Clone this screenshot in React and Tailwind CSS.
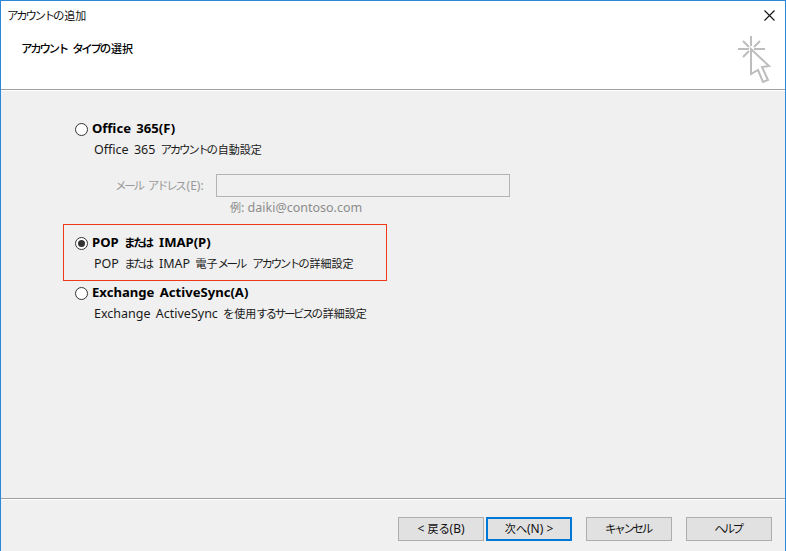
import React from 'react';

const jp = 'font-["Noto_Sans","Noto_Sans_CJK_JP",sans-serif]';

// kana are narrow in the original UI font
const K = ({ children }) => <span className="text-[11.5px] tracking-[-2.3px] mr-[2px]">{children}</span>;
const H = ({ children }) => <span className="text-[11px]">{children}</span>;

const Radio = ({ checked }) => (
  <span className="w-[13px] h-[13px] rounded-full border border-[#333333] bg-white flex items-center justify-center shrink-0">
    {checked && <span className="w-[7px] h-[7px] rounded-full bg-[#333333]" />}
  </span>
);

const Option = ({ label, desc, checked }) => (
  <div>
    <div className="flex items-center gap-[4px] h-[16px]">
      <Radio checked={checked} />
      <span className="text-[13.1px] font-bold text-black whitespace-nowrap [word-spacing:2px]">{label}</span>
    </div>
    <div className="mt-[5px] ml-[19px] h-[16px] text-[12.5px] leading-[16px] text-[#1a1a1a] whitespace-nowrap [word-spacing:2px]">{desc}</div>
  </div>
);

const Btn = ({ children, primary, className = '' }) => (
  <button
    className={`w-[86px] h-[24px] bg-[#e1e1e1] text-[12px] text-[#111111] flex items-center justify-center whitespace-pre ${
      primary ? 'border-2 border-[#0078d7]' : 'border border-[#adadad]'
    } ${className}`}
  >
    {children}
  </button>
);

export default function App() {
  return (
    <div className={`w-[786px] h-[551px] flex flex-col bg-[#f0f0f0] overflow-hidden border-t border-x border-[#2b88d8] ${jp}`}>
      {/* Title + header */}
      <header className="h-[88px] bg-white flex justify-between shrink-0">
        <div className="pl-[6px] pt-[6px]">
          <div className="text-[12px] leading-[18px] text-[#111111]"><K>アカウントの</K><H>追加</H></div>
          <h1 className="mt-[15px] ml-[14px] text-[12px] leading-[18px] font-medium text-black"><K>アカウント</K> <K>タイプの</K><H>選択</H></h1>
        </div>
        <div className="pt-[9px] w-[60px] flex flex-col items-end">
          <svg width="11" height="11" viewBox="0 0 11 11" className="mr-[10px]" stroke="#111111" strokeWidth="1.1" fill="none">
            <path d="M0.5 0.5l10 10M10.5 0.5l-10 10" />
          </svg>
          <svg width="36" height="50" viewBox="0 0 36 50" className="mt-[15px] mr-[11px]" fill="none" stroke="#bdbdbd" strokeWidth="2">
            <path d="M13 0v10M0 13h11M16 13h11M5 5l6 6M22 5l-6 6M5 21l6-6" />
            <path d="M13 13l18 17-7 1 6 13-5 2-5-12-7 4z" />
          </svg>
        </div>
      </header>
      <div className="h-px bg-[#a0a0a0] shrink-0" />
      <div className="h-px bg-white shrink-0" />

      {/* Options */}
      <main className="flex-1 pt-[30px] pl-[62px]">
        <div className="pl-[12px]">
          <Option label="Office 365(F)" desc={<>Office 365 <K>アカウントの</K><H>自動設定</H></>} />
          <div className="mt-[16px] flex items-center ml-[40px] h-[23px]">
            <span className="w-[101px] text-[12px] text-[#9a9a9a] whitespace-nowrap"><K>メール</K> <K>アドレス</K>(E):</span>
            <div className="w-[294px] h-[23px] border border-[#b4b4b4] bg-[#f0f0f0]" />
          </div>
          <div className="mt-[3px] ml-[155px] text-[12.5px] leading-[16px] text-[#8c8c8c]"><H>例</H>: daiki@contoso.com</div>
        </div>
        <div className="mt-[8px] w-[324px] h-[57px] border border-[#f03a17] pl-[11px] pt-[10px]">
          <Option
            label={<>POP <K>または</K> IMAP(P)</>}
            desc={<>POP <K>または</K> IMAP <H>電子</H><K>メール</K> <K>アカウントの</K><H>詳細設定</H></>}
            checked
          />
        </div>
        <div className="mt-[4px] pl-[12px]">
          <Option
            label="Exchange ActiveSync(A)"
            desc={<>Exchange ActiveSync <K>を</K><H>使用</H><K>するサービスの</K><H>詳細設定</H></>}
          />
        </div>
      </main>

      {/* Footer */}
      <div className="h-px bg-[#a0a0a0] shrink-0" />
      <div className="h-px bg-white shrink-0" />
      <footer className="h-[51px] shrink-0 flex items-start pt-[17px] pl-[397px]">
        <Btn><span>&lt; <H>戻</H><K>る</K>(B)</span></Btn>
        <Btn primary className="ml-[2px]"><span><H>次</H><K>へ</K>(N) &gt;</span></Btn>
        <Btn className="ml-[14px]"><K>キャンセル</K></Btn>
        <Btn className="ml-[14px]"><K>ヘルプ</K></Btn>
      </footer>
    </div>
  );
}
